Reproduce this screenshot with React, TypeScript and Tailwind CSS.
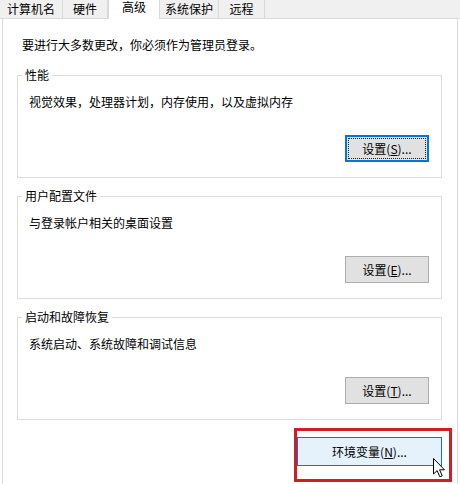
const tabs = [
  { label: "计算机名", cls: "w-[63px]" },
  { label: "硬件", cls: "w-[45px]" },
  { label: "高级", cls: "w-[52px]", active: true },
  { label: "系统保护", cls: "w-[59px]" },
  { label: "远程", cls: "w-[46px]" },
];

const groups = [
  { title: "性能", desc: "视觉效果，处理器计划，内存使用，以及虚拟内存", key: "S", focused: true },
  { title: "用户配置文件", desc: "与登录帐户相关的桌面设置", key: "E" },
  { title: "启动和故障恢复", desc: "系统启动、系统故障和调试信息", key: "T" },
];

const SettingsButton = ({ hotkey, focused }: { hotkey: string; focused?: boolean }) => (
  <button
    className={
      focused
        ? "w-[84px] h-[27px] bg-[#e1e1e1] border-2 border-[#0078d7] outline-1 outline-dotted outline-[#222] outline-offset-[-4px] text-[12px] leading-4"
        : "w-[84px] h-[27px] bg-[#e1e1e1] border border-[#adadad] text-[12px] leading-4"
    }
  >
    设置(<span className="underline">{hotkey}</span>)...
  </button>
);

const Cursor = () => (
  <svg width="13" height="20" viewBox="0 0 13 20" className="absolute left-[136px] top-[21px]">
    <path
      d="M0.5 0.5 L0.5 16 L4.2 12.6 L6.8 18.8 L9.2 17.8 L6.6 11.8 L11.5 11.8 Z"
      fill="#fff"
      stroke="#000"
      strokeWidth="1"
      strokeLinejoin="miter"
    />
  </svg>
);

export default function App() {
  return (
    <div className="w-[460px] h-[484px] bg-white overflow-hidden flex flex-col text-black font-['Noto_Sans_CJK_SC',sans-serif] text-[12px]">
      {/* tab strip */}
      <div className="h-[19px] flex items-start bg-[#f0f0f0] border-b border-[#d9d9d9] shrink-0">
        {tabs.map((t) =>
          t.active ? (
            <div
              key={t.label}
              className={`${t.cls} h-[19px] bg-white border-x border-[#d9d9d9] text-center leading-[13px]`}
            >
              {t.label}
            </div>
          ) : (
            <div
              key={t.label}
              className={`${t.cls} h-[18px] pt-px border-r border-[#d9d9d9] text-center leading-4`}
            >
              {t.label}
            </div>
          )
        )}
      </div>

      {/* page body */}
      <div className="flex-1 mx-[2px] border-x border-[#d9d9d9] pl-[14px] pr-[15px] flex flex-col">
        <p className="mt-[18px] pl-[5px] leading-4">要进行大多数更改，你必须作为管理员登录。</p>

        <div className="mt-[14px] flex flex-col gap-[10px]">
          {groups.map((g) => (
            <fieldset key={g.title} className="border border-[#dcdcdc] pl-[11px] pr-[12px] pb-[15px]">
              <legend className="-ml-[7px] px-[3px] leading-4">{g.title}</legend>
              <p className="mt-[11px] leading-4">{g.desc}</p>
              <div className="mt-[25px] flex justify-end">
                <SettingsButton hotkey={g.key} focused={g.focused} />
              </div>
            </fieldset>
          ))}
        </div>

        <div className="mt-[17px] flex justify-end">
          <div className="relative">
            <button className="w-[145px] h-[29px] bg-[#e5f1fb] border border-[#0078d7] text-[12px] leading-4">
              环境变量(<span className="underline">N</span>)...
            </button>
            <div className="absolute -left-[3px] -top-[9px] w-[158px] h-[54px] border-[3px] border-[#cc1f26] pointer-events-none" />
            <Cursor />
          </div>
        </div>
      </div>
    </div>
  );
}
